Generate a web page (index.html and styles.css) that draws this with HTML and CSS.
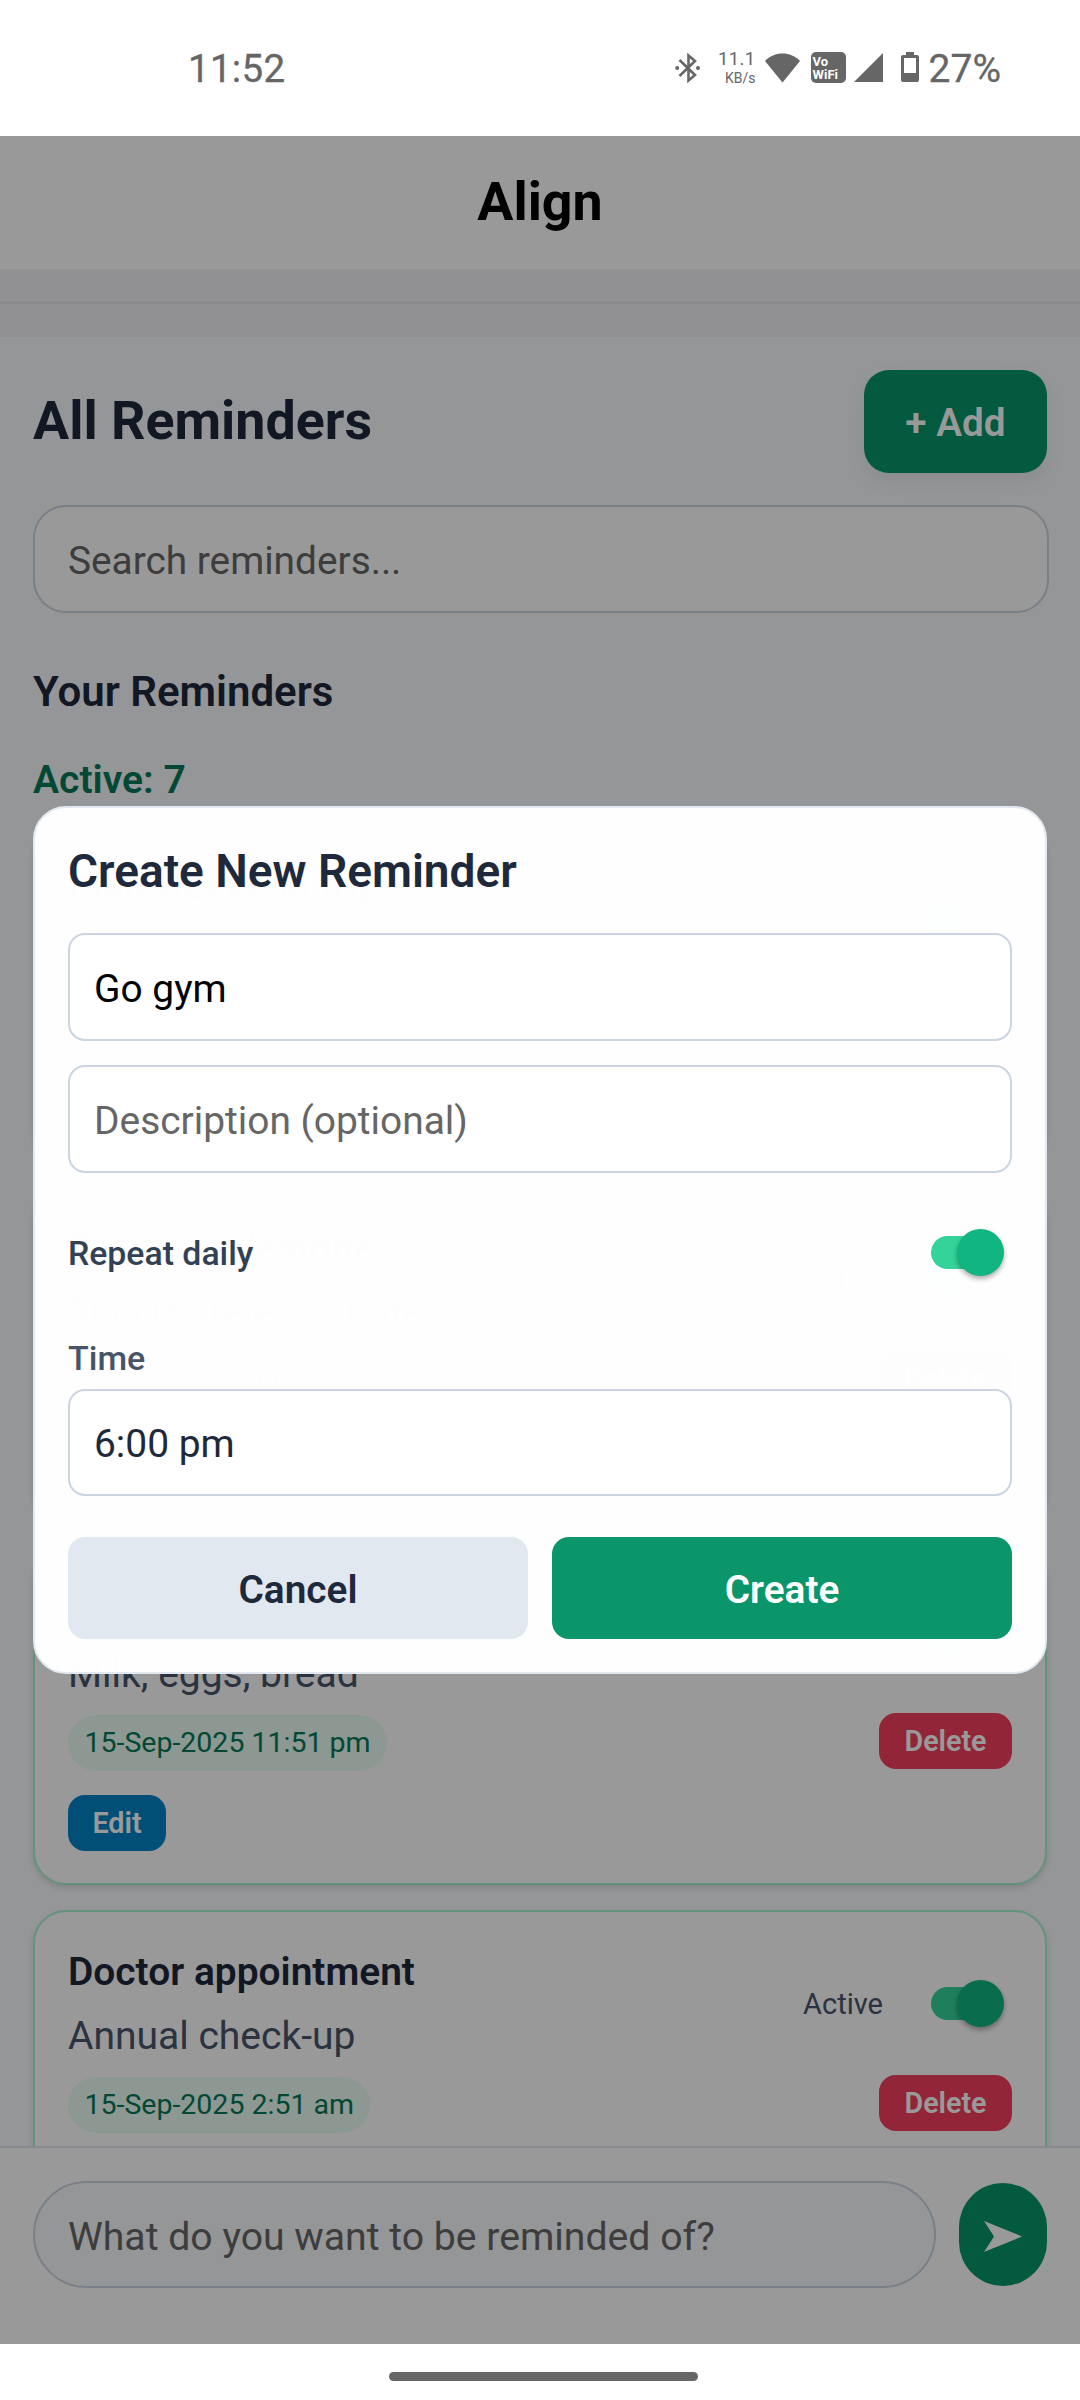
FILE: index.html
```html
<!DOCTYPE html>
<html lang="en">
<head>
<meta charset="utf-8">
<title>Align</title>
<link rel="stylesheet" href="styles.css">
</head>
<body>
<div class="screen">
  <header class="status">
    <span class="clock">11:52</span>
    <div class="indicators">
      <svg class="i-bt" width="26" height="30" viewBox="0 0 26 30"><g fill="none" stroke="#666" stroke-width="2.6"><path d="M4.500 7 20 22 13.500 27.500V2.500L20 8 4.500 23"/></g><circle cx="2.200" cy="15" r="2" fill="#666"/><circle cx="23" cy="15" r="2" fill="#666"/></svg>
      <span class="speed"><span class="rate">11.1</span><span class="unit">KB/s</span></span>
      <svg class="i-wifi" width="36" height="30" viewBox="0 0 36 30"><path fill="#666" d="M0 8C9-2 26-2 35 8L17.500 29.500Z"/></svg>
      <span class="vowifi"><span>Vo</span><span>WiFi</span></span>
      <svg class="i-sig" width="29" height="29" viewBox="0 0 29 29"><path fill="#666" d="M29 0V29H0Z"/></svg>
      <svg class="i-bat" width="18" height="30" viewBox="0 0 18 30"><path fill="#666" fill-rule="evenodd" d="M5 0h8v3h3a2 2 0 0 1 2 2v23a2 2 0 0 1-2 2H2a2 2 0 0 1-2-2V5a2 2 0 0 1 2-2h3zM3 6v15h12V6z"/></svg>
      <span class="pct">27%</span>
    </div>
  </header>
  <main class="app">
    <div class="titlebar">Align</div>
    <div class="strip"></div>
    <div class="strip strip-low"></div>
    <section class="list">
      <div class="list-head">
        <h1>All Reminders</h1>
        <button class="add">+ Add</button>
      </div>
      <div class="search">Search reminders...</div>
      <h2>Your Reminders</h2>
      <p class="count">Active: 7</p>
      <div class="cards">
        <article class="card">
          <div class="card-top">
            <div class="card-text"><h3>Plan weekend trip</h3></div>
            <span class="switch"></span>
          </div>
        </article>
        <article class="card">
          <div class="card-top">
            <div class="card-text"><h3>Project milestone</h3><p>Finalize release notes</p></div>
            <span class="state">Active</span><span class="switch"></span>
          </div>
          <div class="card-row"><span class="when">15-Sep-2025 11:51 pm</span><button class="delete">Delete</button></div>
        </article>
        <article class="card">
          <div class="card-top">
            <div class="card-text"><h3>&nbsp;</h3><p>Milk, eggs, bread</p></div>
            <span class="switch"></span>
          </div>
          <div class="card-row"><span class="when">15-Sep-2025 11:51 pm</span><button class="delete">Delete</button></div>
          <button class="edit">Edit</button>
        </article>
        <article class="card">
          <div class="card-top">
            <div class="card-text"><h3>Doctor appointment</h3><p>Annual check-up</p></div>
            <span class="state">Active</span><span class="switch"></span>
          </div>
          <div class="card-row"><span class="when">15-Sep-2025 2:51 am</span><button class="delete">Delete</button></div>
        </article>
      </div>
    </section>
    <footer class="composer">
      <div class="prompt">What do you want to be reminded of?</div>
      <button class="send"><svg width="38" height="31" viewBox="0 0 38 31"><path fill="#fff" d="M0 0 38 15.500 0 31 10 15.500Z"/></svg></button>
    </footer>
    <div class="overlay">
      <div class="modal">
        <h2 class="modal-title">Create New Reminder</h2>
        <div class="field typed">Go gym</div>
        <div class="field hint">Description (optional)</div>
        <div class="repeat"><span>Repeat daily</span><span class="switch"></span></div>
        <div class="label">Time</div>
        <div class="field time">6:00 pm</div>
        <div class="actions"><button class="cancel">Cancel</button><button class="create">Create</button></div>
      </div>
    </div>
  </main>
  <div class="navbar"><span class="pill"></span></div>
</div>
</body>
</html>
```
FILE: styles.css
```css
* { box-sizing: border-box; }
body, h1, h2, h3, p { margin: 0; }
body { font-family: Roboto, "Liberation Sans", sans-serif; background: #fff; }
button { border: 0; padding: 0; font: inherit; color: #fff; }
svg { display: block; flex: none; }

.screen { width: 1080px; height: 2400px; display: flex; flex-direction: column; overflow: hidden; }

/* System status bar */
.status { height: 136px; flex: none; display: flex; justify-content: space-between; align-items: flex-start; padding: 46px 79px 0 188px; color: #666; }
.clock { font-size: 38.5px; line-height: 45px; letter-spacing: .3px; -webkit-text-stroke: .3px #666; }
.indicators { display: flex; align-items: flex-start; }
.i-bt { margin: 7px 1px 0 0; }
.speed { display: flex; flex-direction: column; align-items: flex-end; width: 54px; margin: 3px 9px 0 0; font-size: 18.5px; line-height: 20px; }
.rate { letter-spacing: .4px; }
.unit { font-size: 14px; line-height: 18px; }
.i-wifi { margin-top: 7px; }
.vowifi { display: flex; flex-direction: column; width: 35px; height: 31px; margin: 6px 8px 0 10px; padding: 3px 0 0 2px; border-radius: 5px; background: #666; color: #fff; font-size: 13px; line-height: 13px; font-weight: 700; }
.i-sig { margin-top: 7px; }
.i-bat { margin: 6px 10px 0 18px; }
.pct { font-size: 39px; line-height: 46px; -webkit-text-stroke: .3px #666; }

/* Application */
.app { position: relative; height: 2208px; flex: none; display: flex; flex-direction: column; background: #f8fafc; }
.titlebar { height: 133px; flex: none; background: #fff; text-align: center; font-size: 53.7px; line-height: 132px; font-weight: 700; color: #000; }
.strip { height: 35px; flex: none; background: #f2f2f5; border-bottom: 3px solid #e9e9ec; }
.strip-low { height: 33px; border: 0; }
.list { flex: 1; min-height: 0; overflow: hidden; padding: 33px 33px 0; background: #f8fafc; }
.list-head { height: 103px; display: flex; align-items: center; justify-content: space-between; }
h1 { margin-top: -2px; font-size: 53.8px; line-height: 62px; font-weight: 700; color: #1e293b; }
.add { width: 183px; height: 103px; padding-top: 2px; border-radius: 25px; background: #059669; font-size: 38.7px; font-weight: 600; box-shadow: 0 8px 20px rgba(0,0,0,.07); }
.search { width: 1016px; height: 108px; margin-top: 32px; border: 2px solid #cbd5e1; border-radius: 33px; padding: 0 33px; background: #fff; font-size: 38.8px; line-height: 107px; color: #666; }
.list h2 { margin-top: 54px; font-size: 42px; line-height: 50px; font-weight: 600; color: #1e293b; }
.count { margin-top: 40px; font-size: 39.1px; line-height: 46px; font-weight: 600; color: #047857; }
.cards { display: flex; flex-direction: column; gap: 25px; margin-top: 21px; }
.card { height: 337px; flex: none; border: 2px solid #a7f3d0; border-radius: 33px; padding: 33px 33px 0; background: #fff; box-shadow: 0 3px 6px rgba(0,0,0,.12); }
.card-top { display: flex; align-items: center; height: 118px; }
.card-text { flex: 1; align-self: flex-start; }
h3 { font-size: 38.9px; line-height: 54px; font-weight: 600; color: #1e293b; }
.card-text p { margin-top: 11px; font-size: 39px; line-height: 52px; color: #475569; }
.state { margin-right: 48px; font-size: 29px; line-height: 36px; color: #475569; }
.switch { position: relative; flex: none; width: 73px; height: 48px; margin-right: 8px; }
.switch::before { content: ""; position: absolute; left: 0; top: 7px; width: 58px; height: 33px; border-radius: 17px; background: #34d399; }
.switch::after { content: ""; position: absolute; right: 0; top: 0; width: 47px; height: 47px; border-radius: 50%; background: #10b581; box-shadow: 0 3px 5px rgba(0,0,0,.32); }
.card-row { display: flex; justify-content: space-between; margin-top: 12px; height: 58px; }
.when { height: 56px; margin-top: 2px; border-radius: 28px; padding: 0 16.5px; background: #ecfdf5; font-size: 28.5px; line-height: 56px; color: #047857; }
.delete, .edit { height: 56px; border-radius: 17px; font-size: 28.7px; font-weight: 600; }
.delete { width: 133px; background: #f43f5e; }
.edit { display: block; width: 98px; margin-top: 24px; background: #0284c7; }

.composer { flex: none; height: 198px; display: flex; justify-content: space-between; border-top: 2px solid #e2e8f0; padding: 33px 33px 0 33px; background: #fff; }
.prompt { width: 903px; height: 107px; border: 2px solid #cbd5e1; border-radius: 54px; padding: 0 33px; background: #f8fafc; font-size: 39.2px; line-height: 108px; color: #666; }
.send { width: 88px; height: 103px; margin-top: 2px; border-radius: 44px; background: #059669; display: flex; align-items: center; justify-content: center; padding-top: 4px; }

/* Dialog over the list */
.overlay { position: absolute; inset: 0; background: rgba(0,0,0,.4); padding: 670px 33px 0; }
.modal { height: 868px; border: 2px solid #e2e8f0; border-radius: 33px; padding: 33px 33px 0; background: rgba(255,255,255,.992); }
.modal-title { font-size: 46px; line-height: 61px; font-weight: 600; color: #1e293b; }
.field { height: 108px; border: 2px solid #cbd5e1; border-radius: 17px; padding: 0 24px; background: #fff; font-size: 38.9px; line-height: 107px; }
.typed { margin-top: 31px; color: #000; }
.hint { margin-top: 24px; color: #666; }
.repeat { display: flex; align-items: center; justify-content: space-between; height: 48px; margin-top: 56px; font-size: 33.8px; font-weight: 500; color: #334155; }
.label { margin-top: 61px; font-size: 34px; line-height: 40px; font-weight: 500; color: #475569; }
.time { height: 107px; margin-top: 11px; line-height: 106px; color: #1e293b; }
.actions { display: flex; gap: 24px; margin-top: 41px; }
.actions button { flex: 1; height: 102px; padding-top: 2px; border-radius: 17px; font-size: 38.8px; font-weight: 600; }
.actions .cancel { background: #e2e8f0; color: #1e293b; }
.actions .create { background: #0a966a; }

/* Gesture bar */
.navbar { flex: 1; display: flex; justify-content: center; align-items: flex-start; padding: 28px 0 0 7px; }
.pill { width: 309px; height: 9px; border-radius: 5px; background: #666; }
```
